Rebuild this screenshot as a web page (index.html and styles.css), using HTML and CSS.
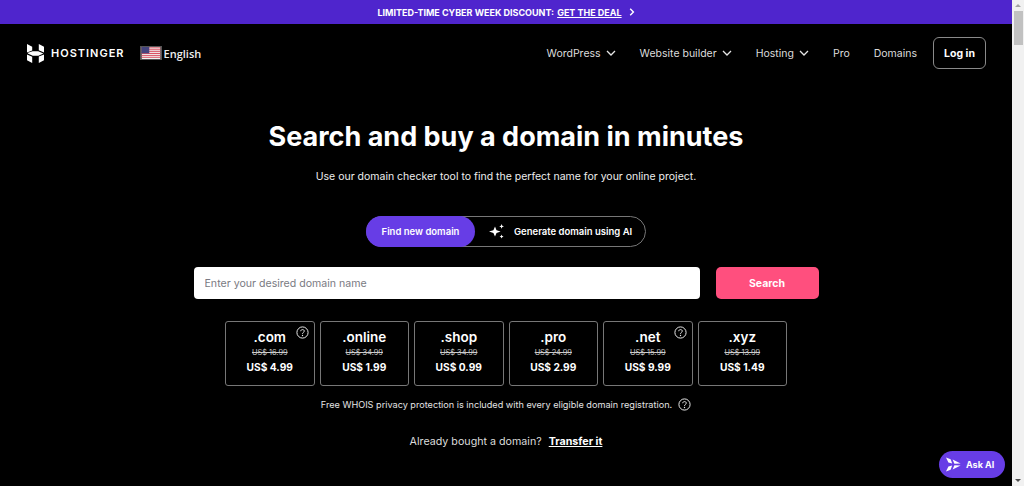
FILE: index.html
```html
<!DOCTYPE html>
<html lang="en">
<head>
    <meta charset="UTF-8">
    <meta name="viewport" content="width=device-width, initial-scale=1.0">
    <title>Domain Checker</title>
    <link rel="stylesheet" href="styles.css">
</head>
<body>
    <div class="page">
        <!-- Promo bar -->
        <div class="promo">
            <span>LIMITED-TIME CYBER WEEK DISCOUNT:</span>
            <a href="#" class="promo-link">GET THE DEAL</a>
            <svg class="promo-arrow" width="6" height="8" viewBox="0 0 6 8"><path d="M1.2 .8 4.4 4 1.2 7.2" fill="none" stroke="#fff" stroke-width="1.4"/></svg>
        </div>

        <!-- Header -->
        <header class="nav">
            <div class="nav-left">
                <a href="#" class="logo">
                    <svg width="17" height="19" viewBox="0 0 17 19">
                        <path d="M0 0 5.2 2.7V6.6L0 8.4ZM11.8 0 17 2.7V8.6L11.8 6.2ZM0 10.4 5.2 12.8V19L0 16.3ZM17 10.6V16.3L11.8 19V12.4ZM1 8.8 5.6 7.2H11.2L16.4 9.6 11.4 11.8H5.8L.8 9.6Z" fill="#fff"/>
                    </svg>
                    <span class="logo-text">HOSTINGER</span>
                </a>
                <a href="#" class="lang">
                    <svg class="flag" width="22" height="14" viewBox="0 0 22 14">
                        <rect width="22" height="14" fill="#f3f3f3"/>
                        <path d="M0 1h22M0 3.2h22M0 5.4h22M0 7.6h22M0 9.8h22M0 12h22" stroke="#d8485a" stroke-width="1.1"/>
                        <rect width="9" height="7.4" fill="#44447e"/>
                    </svg>
                    English
                </a>
            </div>
            <nav class="nav-right">
                <a href="#" class="nav-item">WordPress <svg width="10" height="6" viewBox="0 0 10 6"><path d="M1 1 5 5 9 1" fill="none" stroke="#e6e6e6" stroke-width="1.3"/></svg></a>
                <a href="#" class="nav-item">Website builder <svg width="10" height="6" viewBox="0 0 10 6"><path d="M1 1 5 5 9 1" fill="none" stroke="#e6e6e6" stroke-width="1.3"/></svg></a>
                <a href="#" class="nav-item">Hosting <svg width="10" height="6" viewBox="0 0 10 6"><path d="M1 1 5 5 9 1" fill="none" stroke="#e6e6e6" stroke-width="1.3"/></svg></a>
                <a href="#" class="nav-item">Pro</a>
                <a href="#" class="nav-item">Domains</a>
                <a href="#" class="login">Log in</a>
            </nav>
        </header>

        <!-- Hero -->
        <main class="hero">
            <h1>Search and buy a domain in minutes</h1>
            <p class="subtitle">Use our domain checker tool to find the perfect name for your online project.</p>

            <div class="toggle">
                <span class="toggle-on">Find new domain</span>
                <span class="toggle-off">
                    <svg width="16" height="15" viewBox="0 0 16 15" fill="#fff">
                        <path d="M6 2.6 7.5 6.2 11.6 7.5 7.5 8.9 6 12.6 4.4 8.9 0 7.5 4.4 6.2Z"/>
                        <path d="M12.6 0 13.3 1.7 15 2.4 13.3 3.1 12.6 4.8 11.9 3.1 10.2 2.4 11.9 1.7Z"/>
                        <path d="M12.6 10.6 13.2 12 14.6 12.6 13.2 13.2 12.6 14.6 12 13.2 10.6 12.6 12 12Z"/>
                    </svg>
                    Generate domain using AI
                </span>
            </div>

            <div class="search-row">
                <input class="search-input" type="text" placeholder="Enter your desired domain name">
                <button class="search-btn" type="button">Search</button>
            </div>

            <div class="cards">
                <div class="card">
                    <svg class="help help-card" width="13" height="13" viewBox="0 0 13 13"><use href="#help"/></svg>
                    <div class="tld">.com</div><div class="old">US$ 16.99</div><div class="price">US$ 4.99</div>
                </div>
                <div class="card"><div class="tld">.online</div><div class="old">US$ 34.99</div><div class="price">US$ 1.99</div></div>
                <div class="card"><div class="tld">.shop</div><div class="old">US$ 34.99</div><div class="price">US$ 0.99</div></div>
                <div class="card"><div class="tld">.pro</div><div class="old">US$ 24.99</div><div class="price">US$ 2.99</div></div>
                <div class="card">
                    <svg class="help help-card" width="13" height="13" viewBox="0 0 13 13"><use href="#help"/></svg>
                    <div class="tld">.net</div><div class="old">US$ 15.99</div><div class="price">US$ 9.99</div>
                </div>
                <div class="card"><div class="tld">.xyz</div><div class="old">US$ 13.99</div><div class="price">US$ 1.49</div></div>
            </div>

            <p class="whois">
                Free WHOIS privacy protection is included with every eligible domain registration.
                <svg class="help" width="13" height="13" viewBox="0 0 13 13"><use href="#help"/></svg>
            </p>

            <p class="transfer">Already bought a domain? <a href="#">Transfer it</a></p>
        </main>

        <a href="#" class="ask">
            <svg width="15" height="15" viewBox="0 0 15 15" fill="#fff">
                <path d="M0 .5 4.6 2.2 6.2 6.4 2.4 5.6Z"/>
                <path d="M0 14.5 4.6 12.8 6.2 8.6 2.4 9.4Z"/>
                <path d="M6.6 2.6 14.6 6.4 8.4 6.8Z"/>
                <path d="M6.6 12.4 14.6 8.6 8.4 8.2Z"/>
            </svg>
            Ask AI
        </a>
    </div>

    <div class="scrollbar">
        <div class="scroll-up"></div>
        <div class="scroll-thumb"></div>
        <div class="scroll-down"></div>
    </div>

    <!-- shared question mark icon -->
    <svg class="defs" width="0" height="0">
        <symbol id="help" viewBox="0 0 13 13">
            <circle cx="6.5" cy="6.5" r="5.6" fill="none" stroke="#e8e8e8" stroke-width="1"/>
            <path d="M4.7 5.2C4.8 4.1 5.6 3.6 6.5 3.6 7.5 3.6 8.3 4.2 8.3 5.1 8.3 6.3 6.6 6.4 6.5 7.8" fill="none" stroke="#e8e8e8" stroke-width="1"/>
            <circle cx="6.5" cy="9.5" r=".7" fill="#e8e8e8"/>
        </symbol>
    </svg>
</body>
</html>
```

FILE: styles.css
```css
* {
    box-sizing: border-box;
}

html, body {
    height: 100%;
    margin: 0;
    overflow: hidden;
}

body {
    display: flex;
    font-family: Inter, "Liberation Sans", sans-serif;
    background-color: #000;
    color: #fff;
}

a {
    color: inherit;
    text-decoration: none;
}

.page {
    position: relative;
    flex: 1;
    min-width: 0;
}

.defs {
    position: absolute;
}

.promo {
    display: flex;
    align-items: center;
    justify-content: center;
    gap: 3px;
    height: 24px;
    background-color: #4f25cd;
    font-size: 9px;
    font-weight: 700;
}

.promo-link {
    text-decoration: underline;
}

.promo-arrow {
    margin-left: 4px;
}

.nav {
    display: flex;
    justify-content: space-between;
    align-items: center;
    height: 58px;
    padding: 0 26px 0 27px;
}

.nav-left, .nav-right {
    display: flex;
    align-items: center;
}

.logo {
    display: flex;
    align-items: center;
    gap: 7px;
}

.logo-text {
    font-size: 11px;
    font-weight: 600;
    letter-spacing: 1px;
}

.lang {
    display: flex;
    align-items: center;
    gap: 2px;
    margin-left: 15px;
    font-family: "Open Sans", sans-serif;
    font-size: 11px;
    font-weight: 600;
    color: #eee;
}

.flag {
    border: 1px solid #555;
}

.nav-right {
    gap: 24px;
}

.nav-item {
    display: flex;
    align-items: center;
    gap: 5px;
    font-size: 10.5px;
    color: #dcdcdc;
}

.login {
    display: flex;
    align-items: center;
    justify-content: center;
    width: 53px;
    height: 32px;
    margin-left: -8px;
    border: 1px solid #8a8a8a;
    border-radius: 6px;
    font-size: 10.5px;
    font-weight: 700;
}

.hero {
    display: flex;
    flex-direction: column;
    align-items: center;
}

h1 {
    margin: 37px 0 0;
    font-size: 27px;
    line-height: 36px;
    font-weight: 700;
}

.subtitle {
    margin: 13px 0 0;
    font-size: 10.5px;
    line-height: 18px;
    color: #eee;
}

.toggle {
    display: flex;
    align-items: center;
    width: 280px;
    height: 31px;
    margin-top: 30px;
    border: 1px solid #777;
    border-radius: 16px;
    font-size: 9.5px;
    font-weight: 600;
}

.toggle-on {
    display: flex;
    align-items: center;
    justify-content: center;
    width: 109px;
    height: 31px;
    margin-left: -1px;
    background-color: #673de6;
    border-radius: 16px;
}

.toggle-off {
    display: flex;
    align-items: center;
    gap: 9px;
    padding-left: 14px;
}

.search-row {
    display: flex;
    align-items: center;
    gap: 16px;
    margin-top: 20px;
}

.search-input {
    width: 506px;
    height: 32px;
    padding: 0 11px;
    border: none;
    border-radius: 4px;
    background-color: #fff;
    font-family: inherit;
    font-size: 10.6px;
}

.search-input::placeholder {
    color: #7a7a82;
}

.search-btn {
    width: 103px;
    height: 32px;
    border: none;
    border-radius: 5px;
    background-color: #ff4f7e;
    color: #fff;
    font-family: inherit;
    font-size: 10.5px;
    font-weight: 700;
}

.cards {
    display: flex;
    gap: 5px;
    margin-top: 22px;
}

.card {
    position: relative;
    display: flex;
    flex-direction: column;
    align-items: center;
    width: 89.5px;
    height: 65px;
    padding-top: 7px;
    border: 1px solid #777;
    border-radius: 3px;
}

.tld {
    font-size: 13.5px;
    line-height: 16px;
    font-weight: 600;
}

.old {
    margin-top: 2px;
    font-size: 7.4px;
    line-height: 12px;
    color: #ccc;
    text-decoration: line-through;
}

.price {
    font-size: 10.2px;
    line-height: 16px;
    font-weight: 700;
}

.help-card {
    position: absolute;
    top: 4px;
    right: 5px;
}

.whois {
    display: flex;
    align-items: center;
    gap: 6px;
    margin: 10px 0 0;
    font-size: 9.15px;
    line-height: 17px;
    color: #e4e4e4;
}

.transfer {
    margin: 20px 0 0;
    font-size: 10.7px;
    line-height: 18px;
    color: #dcdcdc;
}

.transfer a {
    margin-left: 4px;
    font-weight: 700;
    color: #fff;
    text-decoration: underline;
}

/* floating chat button */
.ask {
    position: absolute;
    right: 7px;
    bottom: 8px;
    display: flex;
    align-items: center;
    gap: 5px;
    width: 66px;
    height: 27px;
    padding-left: 7px;
    border-radius: 14px;
    background-color: #673de6;
    font-size: 9px;
    font-weight: 700;
}

.scrollbar {
    display: flex;
    flex-direction: column;
    align-items: center;
    width: 12px;
    background-color: #f1f1f1;
}

.scroll-up, .scroll-down {
    position: relative;
    width: 100%;
    height: 11px;
}

.scroll-up::after, .scroll-down::after {
    content: "";
    position: absolute;
    left: 3px;
    top: 4px;
    border-left: 3px solid transparent;
    border-right: 3px solid transparent;
}

.scroll-up::after {
    border-bottom: 3px solid #a3a3a3;
}

.scroll-down::after {
    border-top: 3px solid #505050;
}

.scroll-thumb {
    width: 9px;
    height: 34px;
    background-color: #c1c1c1;
}

.scroll-down {
    margin-top: auto;
}
```
